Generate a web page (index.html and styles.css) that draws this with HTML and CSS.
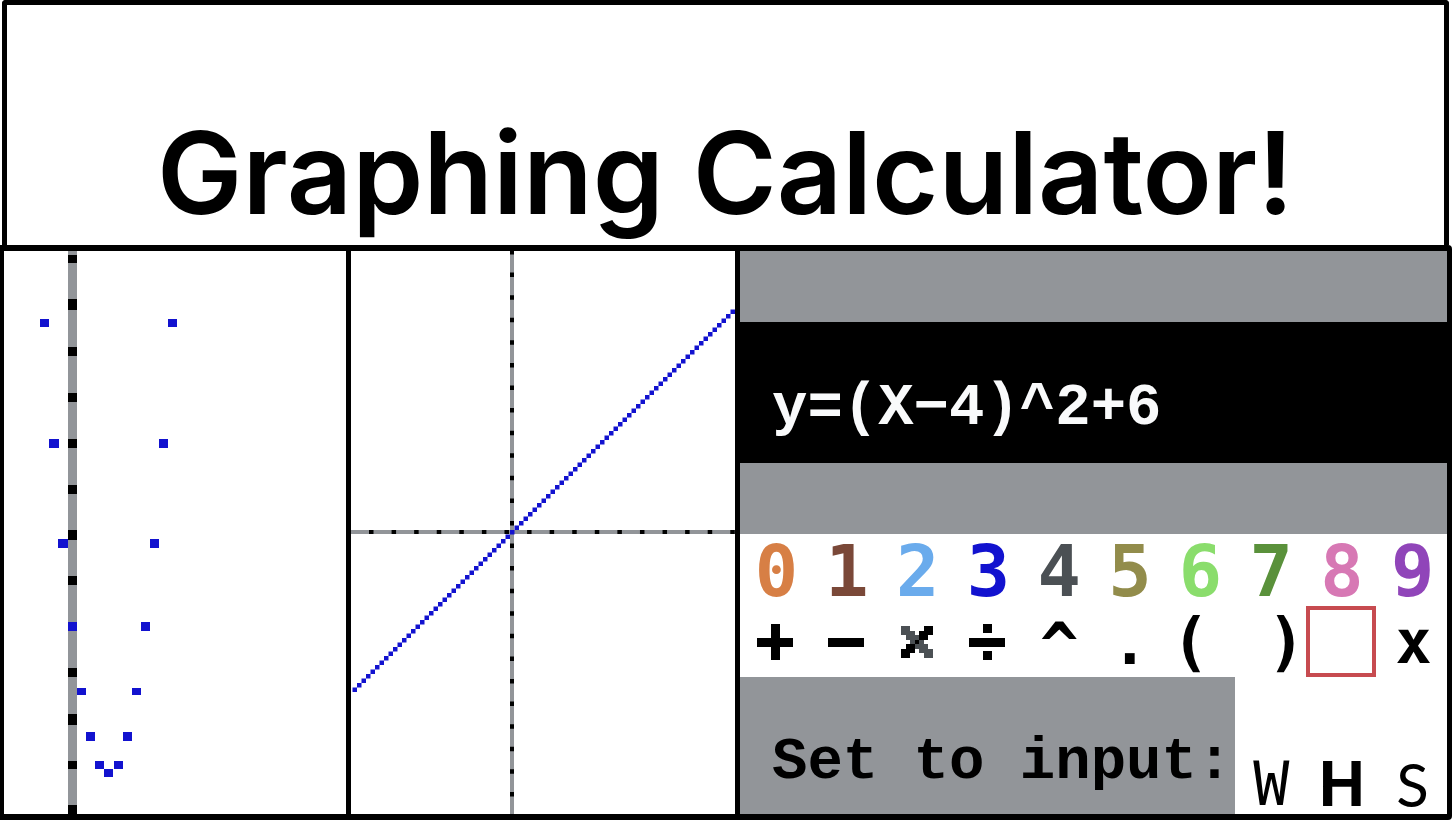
FILE: index.html
```html
<!DOCTYPE html>
<html lang="en">
<head>
<meta charset="utf-8">
<title>Graphing Calculator!</title>
<link rel="stylesheet" href="styles.css">
</head>
<body>
<header class="banner"><h1 class="title">Graphing Calculator!</h1></header>
<main class="board">
  <section class="graph" aria-label="Parabola">
    <svg class="plot" viewBox="0 0 342 563" preserveAspectRatio="none">
      <rect class="axis" x="64" y="0" width="9" height="563"/>
      <g class="tick">
        <rect x="64" y="4" width="9" height="8"/><rect x="64" y="48" width="9" height="11"/>
        <rect x="64" y="96" width="9" height="9"/><rect x="64" y="142" width="9" height="9"/>
        <rect x="64" y="188" width="9" height="9"/><rect x="64" y="234" width="9" height="9"/>
        <rect x="64" y="279" width="9" height="10"/><rect x="64" y="325" width="9" height="9"/>
        <rect x="64" y="417" width="9" height="9"/><rect x="64" y="463" width="9" height="11"/>
        <rect x="64" y="510" width="9" height="8"/><rect x="64" y="554" width="9" height="9"/>
      </g>
      <g class="point">
        <rect x="36" y="68" width="9" height="8"/><rect x="164" y="68" width="9" height="8"/>
        <rect x="45" y="188" width="10" height="9"/><rect x="155" y="188" width="9" height="9"/>
        <rect x="54" y="288" width="10" height="9"/><rect x="146" y="288" width="9" height="9"/>
        <rect x="64" y="371" width="9" height="9"/><rect x="137" y="371" width="9" height="9"/>
        <rect x="73" y="437" width="9" height="7"/><rect x="128" y="437" width="9" height="7"/>
        <rect x="82" y="481" width="9" height="9"/><rect x="119" y="481" width="9" height="9"/>
        <rect x="91" y="510" width="9" height="8"/><rect x="110" y="510" width="9" height="8"/>
        <rect x="100" y="518" width="9" height="8"/>
      </g>
    </svg>
  </section>
  <section class="graph" aria-label="Straight line">
    <svg class="plot" viewBox="0 0 384 563" preserveAspectRatio="none">
      <path class="axis-line" d="M161 0V563M0 281H384"/>
      <path class="ticks" d="M161 -1V563"/>
      <path class="ticks" d="M18 281H384"/>
      <g class="point" id="diagonal"></g>
    </svg>
  </section>
  <section class="panel">
    <div class="entry">
      <input class="formula" type="text" aria-label="Equation" value="y=(X−4)^2+6">
    </div>
    <div class="keys">
      <button class="key orange">0</button>
      <button class="key brown">1</button>
      <button class="key sky">2</button>
      <button class="key blue">3</button>
      <button class="key slate">4</button>
      <button class="key olive">5</button>
      <button class="key lime">6</button>
      <button class="key green">7</button>
      <button class="key pink">8</button>
      <button class="key violet">9</button>
      <button class="key icon" aria-label="Plus"><svg class="op" viewBox="0 0 8 8"><path d="M3 0h2v3h3v2H5v3H3V5H0V3h3z"/></svg></button>
      <button class="key icon" aria-label="Minus"><svg class="op" viewBox="0 0 8 8"><path d="M0 3h8v2H0z"/></svg></button>
      <button class="key icon" aria-label="Times"><svg class="op small" viewBox="0 0 7 7"><path class="shade" d="M0 0h2v1H0zM0 1h3v1H0zM1 2h3v1H1zM2 3h3v1H2zM3 4h3v1H3zM4 5h3v1H4zM5 6h2v1H5z"/><path d="M5 0h2v1H5zM4 1h3v1H4zM4 2h2v1H4zM3 3h1v1H3zM1 4h2v1H1zM0 5h3v1H0zM0 6h2v1H0z"/></svg></button>
      <button class="key icon" aria-label="Divide"><svg class="op" viewBox="0 0 8 8"><path d="M0 3h8v2H0zM3 0h2v2H3zM3 6h2v2H3z"/></svg></button>
      <button class="key caret">^</button>
      <button class="key dot">.</button>
      <button class="key bracket">(</button>
      <button class="key bracket close">)</button>
      <button class="key blank" aria-label="Blank"></button>
      <button class="key letter">x</button>
    </div>
    <div class="footer">
      <p class="prompt">Set to input:</p>
      <button class="key mode">W</button>
      <button class="key mode heavy">H</button>
      <button class="key mode light">S</button>
    </div>
  </section>
</main>
<script src="plot.js"></script>
</body>
</html>
```
FILE: styles.css
```css
* { box-sizing: border-box; }
body {
  margin: 0;
  height: 100vh;
  min-height: 600px;
  padding: 0 1px 2px 0;
  display: grid;
  grid-template-rows: 245fr 575fr;
  background: #fff;
  color: #000;
  font-family: "DejaVu Sans Mono", monospace;
}
.banner {
  margin: 0 3px 0 2px;
  border: 5px solid #000;
  border-bottom: 0;
  border-radius: 4px 4px 0 0;
  display: flex;
  align-items: flex-end;
  justify-content: center;
}
.title {
  margin: 0;
  padding-bottom: 12px;
  font: 600 114px/120px Inter, sans-serif;
  white-space: nowrap;
}
.board {
  min-height: 0;
  border: 6px solid #000;
  border-width: 6px 5px 6px 4px;
  border-radius: 0 4px 4px 0;
  display: grid;
  grid-template-columns: 342fr 384fr 707fr;
  gap: 5px;
  background: #000;
}
.graph { background: #fff; min-height: 0; min-width: 0; }
.plot { display: block; width: 100%; height: 100%; }
.axis { fill: #929599; }
.point { fill: #1212cf; }
.axis-line { stroke: #929599; stroke-width: 4; }
.ticks { stroke: #000; stroke-width: 4; stroke-dasharray: 4.5 18.08; }
.panel {
  min-height: 0;
  min-width: 0;
  display: grid;
  grid-template-rows: 283fr 143fr 137fr;
  background: #929599;
}
.entry { display: grid; grid-template-rows: 1fr 2fr 1fr; min-height: 0; }
.formula {
  grid-row: 2;
  width: 100%;
  min-width: 0;
  border: 0;
  padding: 32px 0 0 32px;
  background: #000;
  color: #f9fafb;
  font: bold 59px/64px "Liberation Mono", monospace;
}
.keys {
  display: grid;
  grid-template: 1fr 1fr / repeat(10, 1fr);
  min-height: 0;
  background: #fff;
}
.key {
  min-width: 0;
  min-height: 0;
  border: 0;
  padding: 2px 0 0 2px;
  display: flex;
  align-items: center;
  justify-content: center;
  background: #fff;
  color: #000;
  font: bold 72px/70px "DejaVu Sans Mono", monospace;
}
.orange { color: #d77f45; }
.brown { color: #7a4838; }
.sky { color: #6aabec; }
.blue { color: #1212cf; }
.slate { color: #4b5054; }
.olive { color: #928c4b; }
.lime { color: #8add6c; }
.green { color: #5a913b; }
.pink { color: #d778b4; }
.violet { color: #9045b9; }
.icon { padding: 2px 0 0; }
.op { width: 36px; height: 36px; shape-rendering: crispEdges; }
.op.small { width: 32px; height: 32px; }
.shade { fill: #4b5054; }
.caret { font-size: 64px; padding-top: 10px; }
.dot { font-size: 60px; padding-top: 4px; }
.bracket { font-size: 64px; }
.bracket:not(.close) { padding-right: 20px; }
.bracket.close { justify-content: flex-end; }
.blank { border: 4px solid #c74b50; }
.letter { font-size: 60px; padding-left: 4px; }
.footer {
  display: grid;
  grid-template-columns: 7fr 1fr 1fr 1fr;
  min-height: 0;
}
.prompt {
  margin: 0;
  padding: 54px 0 0 32px;
  font: bold 59px/64px "Liberation Mono", monospace;
  white-space: nowrap;
}
.mode {
  align-items: flex-end;
  font: 60px/60px "DejaVu Sans Mono", monospace;
}
.heavy { font-family: "Liberation Sans", sans-serif; font-weight: bold; font-size: 64px; }
.light { font-family: Lato, sans-serif; }
```
FILE: plot.js
```js
const group = document.getElementById("diagonal");
const cell = 4.5;
for (let i = -35; i < 50; i++) {
  const square = document.createElementNS("http://www.w3.org/2000/svg", "rect");
  square.setAttribute("x", 159 + i * cell);
  square.setAttribute("y", 279 - i * cell);
  square.setAttribute("width", cell);
  square.setAttribute("height", cell);
  group.append(square);
}
```
